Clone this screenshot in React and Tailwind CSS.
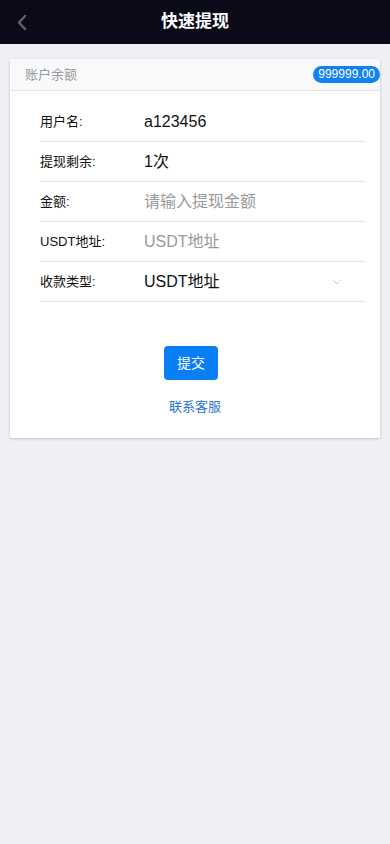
export default function App() {
    const filas = [
        { label: "用户名:", valor: "a123456" },
        { label: "提现剩余:", valor: "1次" },
        { label: "金额:", valor: "请输入提现金额", placeholder: true },
        { label: "USDT地址:", valor: "USDT地址", placeholder: true },
        { label: "收款类型:", valor: "USDT地址", select: true },
    ];

    return (
        <div
            className="w-full min-h-screen bg-[#efeff4]"
            style={{ fontFamily: '"Liberation Sans", Arial, "Noto Sans CJK SC", sans-serif' }}
        >
            <div className="h-11 bg-[#0a0a18] flex items-center relative">
                <svg className="absolute left-[16px] top-[14px]" width="12" height="17" viewBox="0 0 12 17">
                    <path d="M9 2 L3 8.5 L9 15" fill="none" stroke="#5f5f70" strokeWidth="2.4" strokeLinecap="round" strokeLinejoin="round" />
                </svg>
                <h1 className="w-full text-center text-white text-[17px] font-bold">快速提现</h1>
            </div>

            <div className="px-[10px] pt-[15px]">
                <div className="bg-white shadow-[0_1px_3px_rgba(0,0,0,0.2)] rounded-[2px]">
                    <div className="h-[32px] bg-[#f8f9fb] border-b border-[#e3e3e6] flex items-center justify-between pl-[15px]">
                        <span className="text-[13px] text-[#999]">账户余额</span>
                        <span className="bg-[#1282ee] text-white text-[12px] rounded-full px-[5px] leading-[17px]">
                            999999.00
                        </span>
                    </div>

                    <div className="pl-[30px] pr-[15px] pt-[11px]">
                        {filas.map((fila) => (
                            <div
                                key={fila.label}
                                className="h-10 border-b border-[#e5e5e5] flex items-center"
                            >
                                <span className="w-[104px] text-[13px] text-[#111]">{fila.label}</span>
                                <span
                                    className={`flex-1 text-[16px] ${fila.placeholder ? "text-[#999]" : "text-[#111]"}`}
                                >
                                    {fila.valor}
                                </span>
                                {fila.select && (
                                    <svg className="mr-[23px]" width="10" height="6" viewBox="0 0 10 6">
                                        <path d="M1 1 L5 5 L9 1" fill="none" stroke="#ccc" strokeWidth="1" />
                                    </svg>
                                )}
                            </div>
                        ))}
                    </div>

                    <div className="flex flex-col items-center pt-[44px] pb-[21px]">
                        <button className="w-[54px] h-[34px] mr-[8px] bg-[#0a7ff5] text-white text-[14px] rounded-[4px]">
                            提交
                        </button>
                        <span className="mt-[17px] text-[13px] text-[#2b74d3]">联系客服</span>
                    </div>
                </div>
            </div>
        </div>
    );
}
